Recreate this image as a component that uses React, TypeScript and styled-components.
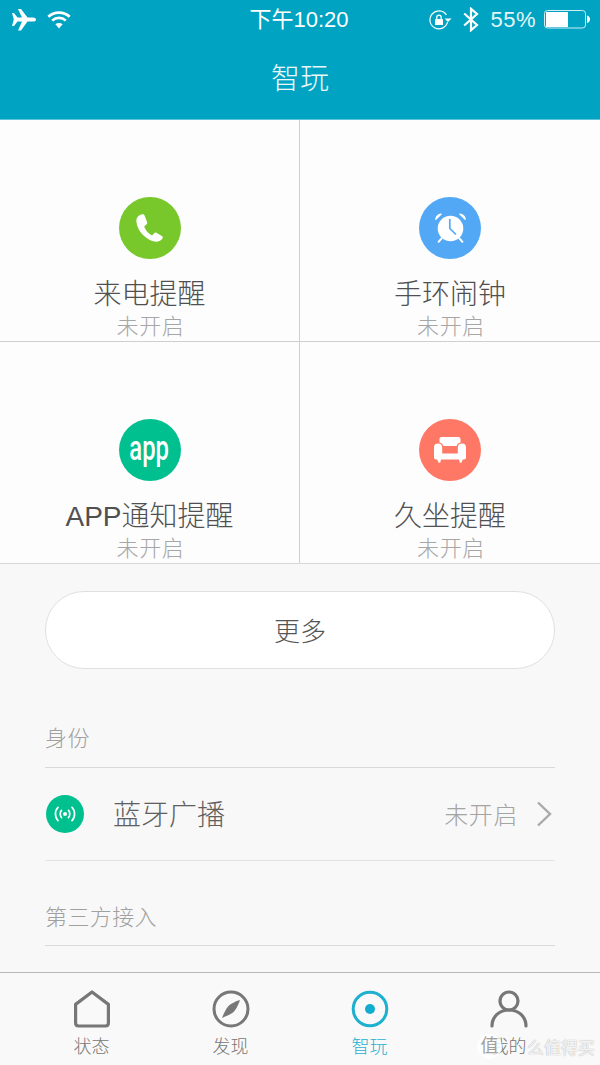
import React from "react";
import styled, { createGlobalStyle } from "styled-components";

const Global = createGlobalStyle`
  html, body { margin: 0; padding: 0; background: #f8f8f8; }
  body { font-family: "Liberation Sans", "Noto Sans CJK SC", sans-serif; }
  * { box-sizing: border-box; }
`;

const Page = styled.div`
  width: 600px; height: 1065px; position: relative; overflow: hidden;
  display: flex; flex-direction: column; background: #f8f8f8;
`;
const Header = styled.header`
  height: 120px; flex: none; background: #00a4c2; color: #fff;
  border-bottom: 1px solid #5fc4d8;
  display: flex; flex-direction: column;
`;
const StatusBar = styled.div`
  height: 39px; display: grid; grid-template-columns: 1fr auto 1fr; align-items: center;
  padding: 0 10px 0 8px;
`;
const StatusLeft = styled.div`display: flex; align-items: center; gap: 11px; padding-left: 4px;`;
const StatusRight = styled.div`display: flex; align-items: center; justify-content: flex-end;`;
const Clock = styled.div`font-size: 22px; line-height: 39px; font-weight: 400;`;
const Percent = styled.span`font-size: 22px; margin: 0 8px 0 11px; letter-spacing: 0.5px; color: #e6f6f9;`;
const Title = styled.h1`
  margin: 0; padding-top: 20px; font-size: 29px; font-weight: 300; text-align: center; line-height: 40px; color: #eaf8fb;
`;
const Grid = styled.section`
  flex: none; display: grid; grid-template-columns: 1fr 1fr; background: #fdfdfd;
  border-bottom: 1px solid #d8d8d8;
`;
const Cell = styled.div<{ $right?: boolean; $last?: boolean }>`
  height: ${p => (p.$last ? 221 : 222)}px; padding-top: 77px;
  display: flex; flex-direction: column; align-items: center;
  border-right: ${p => (p.$right ? "none" : "1px solid #cfcfcf")};
  border-bottom: ${p => (p.$last ? "none" : "1px solid #cfcfcf")};
  overflow: hidden;
`;
const Circle = styled.div<{ $bg: string; $size?: number }>`
  width: ${p => p.$size ?? 62}px; height: ${p => p.$size ?? 62}px; border-radius: 50%; background: ${p => p.$bg};
  display: flex; align-items: center; justify-content: center; flex: none;
`;
const CellTitle = styled.div`
  margin-top: 16px; height: 38px; line-height: 40px; font-size: 28px; font-weight: 300; color: #505050; white-space: nowrap;
`;
const CellState = styled.div`
  height: 28px; line-height: 28px; margin-left: 2px; font-size: 22px; font-weight: 300; letter-spacing: 0.6px; color: #a6a6a6;
`;
const Main = styled.main`flex: 1; padding: 27px 45px 0; min-height: 0;`;
const MoreButton = styled.button`
  display: block; width: 100%; height: 78px; border-radius: 39px; border: 1px solid #e0e0e0;
  background: #fff; color: #555; font: inherit; font-weight: 300; font-size: 26px; padding: 0 0 2px;
`;
const SectionLabel = styled.div<{ $top: number; $h: number }>`
  margin-top: ${p => p.$top}px; height: ${p => p.$h}px; font-size: 22px; font-weight: 300; letter-spacing: 0.4px; line-height: 28px; color: #a0a0a0;
  border-bottom: 1px solid #d9d9d9;
`;
const Row = styled.div`
  height: 93px; display: flex; align-items: center; border-bottom: 1px solid #e2e2e2; padding: 0 3px 0 1px;
`;
const RowTitle = styled.span`margin: 0 0 2px 29px; font-size: 28px; font-weight: 300; color: #606060; flex: 1;`;
const RowState = styled.span`font-size: 24px; font-weight: 300; letter-spacing: 0.6px; color: #a4a4a4; margin: 0 18px 2px 0;`;
const TabBar = styled.nav`
  flex: none; height: 93px; background: #f9f9f9; border-top: 1px solid #b9b9b9;
  display: grid; grid-template-columns: repeat(4, 1fr); padding: 0 22px;
`;
const Tab = styled.div<{ $active?: boolean }>`
  display: flex; flex-direction: column; align-items: center; padding-top: 17px;
  color: ${p => (p.$active ? "#27b1cf" : "#777")};
`;
const TabLabel = styled.span`font-size: 18px; font-weight: 300; line-height: 24px; margin-top: 7px;`;
const Watermark = styled.div`
  position: absolute; left: 477px; top: 1034px; display: flex; align-items: center;
  color: rgba(255,255,255,0.9); font-size: 17px; white-space: nowrap;
  text-shadow: 0 0 1px rgba(110,110,110,0.75);
`;
const WaterDot = styled.span`
  width: 25px; height: 25px; border-radius: 50%; background: rgba(255,255,255,0.82);
  color: #a0a0a0; font-size: 18px; line-height: 25px; text-align: center; text-shadow: none;
  margin-right: 25px;
`;
const BluetoothWrap = styled.span`display: flex; margin-left: 11px;`;

const Plane = () => (
  <svg width="24" height="22" viewBox="0 0 24 22" fill="#fff">
    <path d="M0 4 L2 4 L5.5 8.5 L10 8.5 L6 0 L9 0 L15.5 8.5 L21 8.5 C23 8.5 24 9.6 24 10.5 C24 11.6 23 12.6 21 12.6 L15.5 12.6 L9 21.5 L6 21.5 L10 12.6 L5.5 12.6 L2 17 L0 17 L1.8 10.5 Z" />
  </svg>
);
const Wifi = () => (
  <svg width="24" height="18" viewBox="0 0 24 18" fill="none" stroke="#fff" strokeWidth="2.6">
    <path d="M1.3 5.8 C7 0.2 17 0.2 22.7 5.8" />
    <path d="M5.2 9.6 C9 6 15 6 18.8 9.6" />
    <path d="M12 17.5 L8.4 13.3 C10.4 11.6 13.6 11.6 15.6 13.3 Z" fill="#fff" stroke="none" />
  </svg>
);
const RotationLock = () => (
  <svg width="23" height="20" viewBox="0 0 23 20" fill="none" stroke="#fff" strokeWidth="1.2">
    <path d="M18.6 12.2 A9 9 0 1 1 17.4 4.8" />
    <path d="M15.6 8.4 L22.6 8.4 L19 12 Z" fill="#fff" stroke="none" />
    <rect x="6" y="9" width="8" height="6" rx="0.6" fill="#fff" stroke="none" />
    <path d="M7.8 9 V7.4 A2.2 2.2 0 0 1 12.2 7.4 V9" strokeWidth="1.3" />
  </svg>
);
const Bluetooth = () => (
  <BluetoothWrap>
    <svg width="16" height="25" viewBox="0 0 16 25" fill="none" stroke="#fff" strokeWidth="2.2">
      <path d="M1.2 6.5 L14 18 L8 23.2 V1.8 L14 7 L1.2 18.5" />
    </svg>
  </BluetoothWrap>
);
const Battery = () => (
  <svg width="46" height="19" viewBox="0 0 46 19" fill="none">
    <rect x="0.5" y="0.5" width="41" height="17.5" rx="3" stroke="#cfeef4" />
    <rect x="2" y="2" width="22" height="15" fill="#fff" />
    <path d="M43 5.5 C45 6 46 7.5 46 9.3 C46 11 45 12.5 43 13 Z" fill="#fff" />
  </svg>
);
const Phone = () => (
  <svg width="27" height="28" viewBox="0 0 27 28" fill="#fff">
    <path d="M6.2 0.2 C4 0.6 0.4 2.6 0.4 6.6 C0.4 12 3.4 17.6 7.6 21.6 C11.6 25.4 16 27.8 20.4 27.8 C24 27.8 26.6 25 26.8 23.6 C26.9 22.8 26.5 22.3 25.8 21.9 L20.4 18.8 C19.6 18.4 19 18.5 18.4 19.1 L16.6 21 C16.2 21.4 15.7 21.4 15.2 21.1 C12.2 19.2 9.8 16.4 8.4 13.2 C8.2 12.7 8.3 12.3 8.7 11.9 L10.6 10.2 C11.2 9.6 11.3 9 11.1 8.2 L8.6 1.6 C8.2 0.5 7.4 0 6.2 0.2 Z" />
  </svg>
);
const Alarm = () => (
  <svg width="31" height="30" viewBox="0 0 31 30" fill="none">
    <circle cx="15.5" cy="15.5" r="12.8" fill="#fff" />
    <path d="M0.8 6.4 C1 3.6 3.2 1.2 6.2 1 L0.8 6.4 Z" fill="#fff" stroke="#fff" strokeWidth="1.2" strokeLinejoin="round" />
    <path d="M30.2 6.4 C30 3.6 27.8 1.2 24.8 1 L30.2 6.4 Z" fill="#fff" stroke="#fff" strokeWidth="1.2" strokeLinejoin="round" />
    <path d="M6.6 25.4 L3.6 28.8 M24.4 25.4 L27.4 28.8" stroke="#fff" strokeWidth="2" strokeLinecap="round" />
    <path d="M14.8 6 V15.5 L21 21.5" stroke="#52a8f4" strokeWidth="1.7" />
  </svg>
);
const AppMark = styled.span`
  color: #fff; font-size: 35px; font-weight: 500; font-family: "Roboto", "Liberation Sans", sans-serif;
  transform: scaleX(0.68); line-height: 1; margin-top: -3px;
`;
const Sofa = () => (
  <svg width="32" height="26" viewBox="0 0 32 26" fill="#fff">
    <path d="M5.5 2.2 C5.5 0.8 6.4 0 7.6 0 H24.4 C25.6 0 26.5 0.8 26.5 2.2 V5.4 C24.4 5.8 23 7.4 22.6 9 H9.4 C9 7.4 7.6 5.8 5.5 5.4 Z" />
    <path d="M3.8 6.6 C6.6 6.6 8.2 8.2 8.2 10.6 V16.4 H23.8 V10.6 C23.8 8.2 25.4 6.6 28.2 6.6 C30.6 6.6 32 8.2 32 10.4 V20.4 C32 21.6 31.2 22.4 30 22.4 H28.8 L27.4 25.8 H25.8 L25 22.4 H7 L6.2 25.8 H4.6 L3.2 22.4 H2 C0.8 22.4 0 21.6 0 20.4 V10.4 C0 8.2 1.4 6.6 3.8 6.6 Z" />
  </svg>
);
const Broadcast = () => (
  <svg width="22" height="16" viewBox="0 0 22 16" fill="none" stroke="#fff" strokeWidth="1.7" strokeLinecap="round">
    <circle cx="11" cy="8" r="2" fill="#fff" stroke="none" />
    <path d="M7.5 4.4 C5.8 6.2 5.8 9.8 7.5 11.6 M14.5 4.4 C16.2 6.2 16.2 9.8 14.5 11.6" />
    <path d="M4 1.4 C0.6 4.6 0.6 11.4 4 14.6 M18 1.4 C21.4 4.6 21.4 11.4 18 14.6" />
  </svg>
);
const Chevron = () => (
  <svg width="16" height="26" viewBox="0 0 16 26" fill="none" stroke="#a9a9a9" strokeWidth="2.4">
    <path d="M2 1.5 L14 13 L2 24.5" />
  </svg>
);
const HomeIcon = () => (
  <svg width="36" height="38" viewBox="0 0 36 38" fill="none" stroke="currentColor" strokeWidth="3.2">
    <path d="M18 2 L34.4 14.4 V33 C34.4 35 33.4 36 31.4 36 H4.6 C2.6 36 1.6 35 1.6 33 V14.4 Z" strokeLinejoin="round" />
  </svg>
);
const CompassIcon = () => (
  <svg width="38" height="38" viewBox="0 0 38 38" fill="none" stroke="currentColor" strokeWidth="3">
    <circle cx="19" cy="19" r="17" />
    <path d="M28 10 C26 16 23 21 21 22.4 C19 24 14 26 10 28 C12 23 14.5 18 16.5 16 C18.5 14 24 11 28 10 Z" fill="currentColor" stroke="none" />
  </svg>
);
const TargetIcon = () => (
  <svg width="38" height="38" viewBox="0 0 38 38" fill="none" stroke="currentColor" strokeWidth="3">
    <circle cx="19" cy="19" r="16.8" stroke="#1eb0cf" />
    <circle cx="19" cy="19" r="5" fill="#12acd0" stroke="none" />
  </svg>
);
const PersonIcon = () => (
  <svg width="38" height="38" viewBox="0 0 38 38" fill="none" stroke="currentColor" strokeWidth="3.2">
    <circle cx="19" cy="11" r="9" />
    <path d="M2 36 C2 26.5 9.5 20 19 20 C28.5 20 36 26.5 36 36" strokeLinecap="round" />
  </svg>
);

const cells = [
  { title: "来电提醒", bg: "#78c82b", icon: <Phone /> },
  { title: "手环闹钟", bg: "#52a8f4", icon: <Alarm /> },
  { title: "APP通知提醒", bg: "#00c08f", icon: <AppMark>app</AppMark> },
  { title: "久坐提醒", bg: "#ff7865", icon: <Sofa /> },
];
const tabs = [
  { label: "状态", icon: <HomeIcon /> },
  { label: "发现", icon: <CompassIcon /> },
  { label: "智玩", icon: <TargetIcon />, active: true },
  { label: "我的", icon: <PersonIcon /> },
];

export default function App() {
  return (
    <Page>
      <Global />
      <Header>
        <StatusBar>
          <StatusLeft><Plane /><Wifi /></StatusLeft>
          <Clock>下午10:20</Clock>
          <StatusRight>
            <RotationLock /><Bluetooth /><Percent>55%</Percent><Battery />
          </StatusRight>
        </StatusBar>
        <Title>智玩</Title>
      </Header>
      <Grid>
        {cells.map((c, i) => (
          <Cell key={c.title} $right={i % 2 === 1} $last={i > 1}>
            <Circle $bg={c.bg}>{c.icon}</Circle>
            <CellTitle>{c.title}</CellTitle>
            <CellState>未开启</CellState>
          </Cell>
        ))}
      </Grid>
      <Main>
        <MoreButton>更多</MoreButton>
        <SectionLabel $top={56} $h={43}>身份</SectionLabel>
        <Row>
          <Circle $bg="#00c08f" $size={38}><Broadcast /></Circle>
          <RowTitle>蓝牙广播</RowTitle>
          <RowState>未开启</RowState>
          <Chevron />
        </Row>
        <SectionLabel $top={43} $h={42}>第三方接入</SectionLabel>
      </Main>
      <TabBar>
        {tabs.map(t => (
          <Tab key={t.label} $active={t.active}>
            {t.icon}
            <TabLabel>{t.label}</TabLabel>
          </Tab>
        ))}
      </TabBar>
      <Watermark><WaterDot>值</WaterDot>么值得买</Watermark>
    </Page>
  );
}
